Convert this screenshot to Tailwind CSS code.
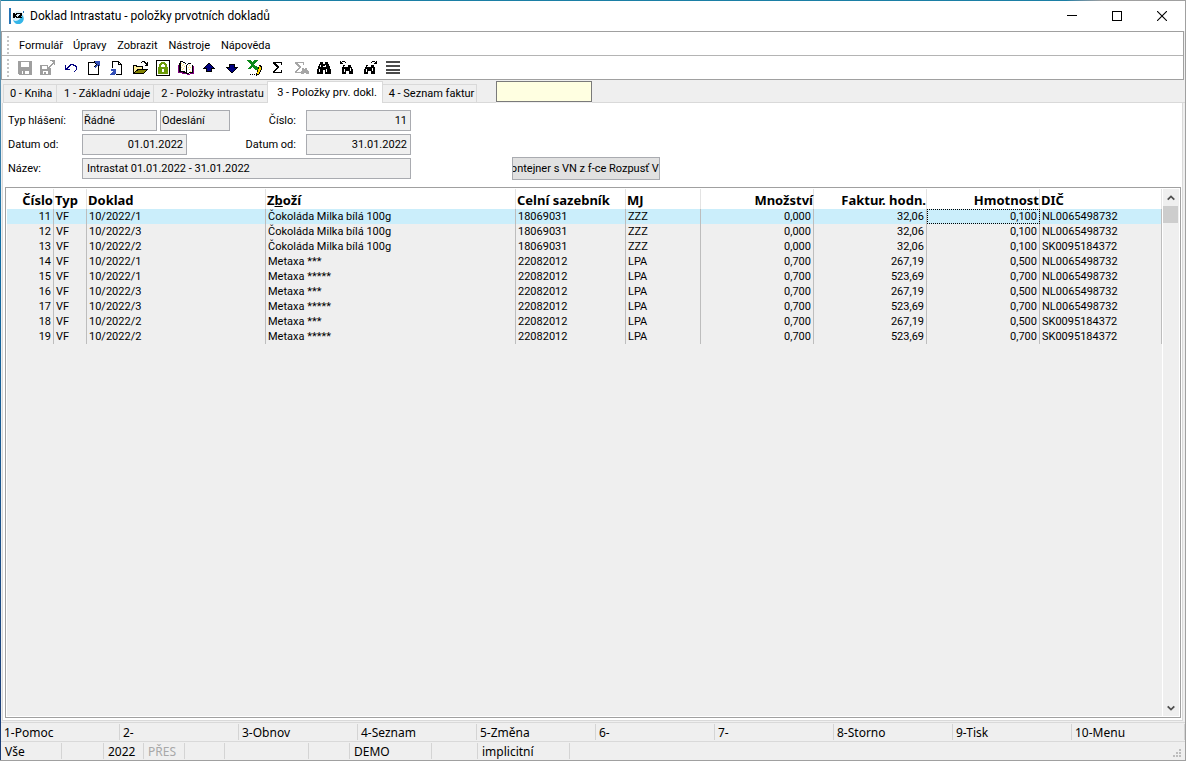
<!DOCTYPE html>
<html lang="cs">
<head>
<meta charset="utf-8">
<title>Doklad Intrastatu - položky prvotních dokladů</title>
<script src="https://cdn.jsdelivr.net/npm/@tailwindcss/browser@4"></script>
</head>
<body class="bg-[#efefef] text-black">
<div class="relative flex h-screen min-h-[480px] flex-col overflow-hidden border-r border-b border-[#a0a0a0] pl-px pt-px font-['Roboto','Noto_Sans',sans-serif] text-[11px] leading-[15px]">
  <div class="absolute inset-x-0 top-0 h-px bg-linear-to-r from-[#1b7fa5] from-90% to-[#a0a0a0] to-93%"></div>
  <div class="absolute inset-y-0 left-0 w-px bg-linear-to-b from-[#7aa3b5] via-[#0f6fa5] via-30% to-[#1c3f78] to-94%"></div>

  <header class="flex h-[30px] shrink-0 items-center bg-white pl-2 text-[12px]">
    <svg class="mr-[5px] size-4" viewBox="0 0 16 16" shape-rendering="crispEdges" aria-hidden="true">
      <circle cx="9" cy="9" r="6" fill="#d9effa" shape-rendering="auto"/>
      <path d="M4 12c3 2 7 1 9-5 3 3 2 7-2 9-3 1-6-1-7-4z" fill="#35b6e8" shape-rendering="auto"/>
      <path d="M0 0h2v16H0z" fill="#2473b5"/>
      <path d="M4 5h2v1h1V5h2v1H8v1H7v1h1v1h1v1H7V9H6v1H4zM9 5h4v3h-1v1h1v1H9V8h1V7h1V6H9z" fill="#000"/>
      <path d="M14 3h1v2h-1z" fill="#2473b5"/>
    </svg>
    <h1 class="flex-1 whitespace-nowrap">Doklad Intrastatu - položky prvotních dokladů</h1>
    <button aria-label="Minimalizovat" class="flex h-full w-[46px] items-center justify-center"><svg class="size-[10px]" viewBox="0 0 10 10" shape-rendering="crispEdges"><path d="M0 4h10v1H0z"/></svg></button>
    <button aria-label="Maximalizovat" class="flex h-full w-[44px] items-center justify-center"><svg class="size-[10px]" viewBox="0 0 10 10" shape-rendering="crispEdges"><path d="M.5 .5h9v9h-9z" fill="none" stroke="#000"/></svg></button>
    <button aria-label="Zavřít" class="flex h-full w-[46px] items-center justify-center"><svg class="size-[10px]" viewBox="0 0 10 10"><path d="M0 0l10 10M10 0L0 10" stroke="#000" stroke-width="1.1"/></svg></button>
  </header>

  <div class="mr-px shrink-0 border border-[#a0a0a0] bg-white">
    <nav class="flex h-[24px] items-center border-b border-[#b4b4b4] pl-[5px] pt-[3px]">
      <span class="mr-[10px] h-[18px] border-l-2 border-dotted border-[#c4c4c4]"></span>
      <button class="mr-[10px]">Formulář</button>
      <button class="mr-[11px]">Úpravy</button>
      <button class="mr-[11px]">Zobrazit</button>
      <button class="mr-[11px]">Nástroje</button>
      <button>Nápověda</button>
    </nav>
    <div class="flex h-[23px] items-center pl-[5px]">
      <span class="mr-[4px] h-[18px] border-l-2 border-dotted border-[#c4c4c4]"></span>
      <button aria-label="Uložit" class="flex w-[23px] justify-center"><svg class="size-4" viewBox="0 0 16 16" shape-rendering="crispEdges"><path d="M1 1h14v14H2v-1H1z" fill="#9f9f9f"/><path d="M4 2h8v5H4zM5 10h7v4H5z" fill="#fff"/><path d="M5 10h7v1H5zM6 11h2v3H6z" fill="#9f9f9f"/></svg></button>
      <button aria-label="Uložit jako" class="flex w-[23px] justify-center"><svg class="size-4" viewBox="0 0 16 16" shape-rendering="crispEdges"><path d="M0 5h8v3h3v7H0z" fill="#9f9f9f"/><path d="M2 6h5v3H2zM3 11h5v3H3z" fill="#fff"/><path d="M4 12h2v2H4zM10 0h5v5h-1V4h-1v1h-1v1h-1v1h-1v1H8V7h1V6h1V5h1V4h1V3h1V2h-1V1h-2z" fill="#9f9f9f"/></svg></button>
      <button aria-label="Zpět" class="flex w-[23px] justify-center"><svg class="size-4" viewBox="0 0 16 16" shape-rendering="crispEdges"><path d="M2 5h1v3h1V7h1V6h1V5h1V4h4v1h2v1h1v4h-1v1h-1v1h-1v-1h1v-1h1V7h-1V6h-2V5H8v1H7v1H6v1H5v1h2v1H2z" fill="#000080"/></svg></button>
      <button aria-label="Otevřít v novém okně" class="flex w-[23px] justify-center"><svg class="size-4" viewBox="0 0 16 16" shape-rendering="crispEdges"><path d="M2 2h11v13H2zM3 3v11h9V3z" fill-rule="evenodd"/><path d="M9 1h5v5h-1v1h-1V6h-1v1h-1v1H9V7H8V6h1V5h1V4H9V3H8V1z" fill="#000"/><path d="M9 1h5v5h-1V5h-1v1h-1v1h-1v1H9V6h1V5h1V4h-1V3H9z" fill="#3450b8"/></svg></button>
      <button aria-label="Převzít" class="flex w-[23px] justify-center"><svg class="size-4" viewBox="0 0 16 16" shape-rendering="crispEdges"><path d="M3 1h7v1h1v1h1v1h1v11H7v-1h5V5H9V2H4v6H3z"/><path d="M10 3h1v1h-1z" fill="#fff"/><path d="M2 9h5v5H6v1H1v-1h1v-1h1v-1h1v-1H2z" fill="#3450b8"/></svg></button>
      <button aria-label="Otevřít" class="flex w-[23px] justify-center"><svg class="size-4" viewBox="0 0 16 16" shape-rendering="crispEdges"><path d="M1 5h4v1h6v3h5v1h-1v1h-1v1h-1v1h-1v1H1z"/><path d="M2 6h2v1h6v2H5v1H4v1H3v1H2z" fill="#ffef9a"/><path d="M6 10h8v1h-1v1h-1v1H3v-1h1v-1h2z" fill="#808000"/><path d="M9 2h1V1h3v1h1v1h1V2h1v4h-3V5h1V4h-1V3h-1V2h-2v1H9z"/></svg></button>
      <button aria-label="Zámek" class="flex w-[23px] justify-center"><svg class="size-4" viewBox="0 0 16 16" shape-rendering="crispEdges"><path d="M1.5 .5h13v15h-13z" fill="#fff" stroke="#000"/><path d="M3 7h1V4h1V3h1V2h4v1h1v1h1v3h1v7H3z" fill="#6a9a08"/><path d="M6 7V5h1V4h2v1h1v2zM7 9h2v3H7z" fill="#fff"/></svg></button>
      <button aria-label="Kniha" class="flex w-[23px] justify-center"><svg class="size-4" viewBox="0 0 16 16" shape-rendering="crispEdges"><path d="M1 3h1V1h3v1h2v1h1v2h1V4h1V3h3v1h1v1h1v8h-4v1H8v-1H5v-1H1z" fill="#000"/><path d="M3 2h2v1h2v1h1v8H7v-1H3zM9 5h1V4h4v8h-3v1H9z" fill="#fff"/><path d="M3 3h1v1H3zM5 4h1v1H5zM4 5h1v1H4zM6 6h1v1H6zM3 7h1v1H3zM5 8h1v1H5zM4 9h1v1H4zM11 5h1v1h-1zM10 7h1v1h-1zM12 7h1v1h-1zM11 9h1v1h-1zM12 11h1v1h-1z" fill="#ffe36a"/><path d="M0 5h1v7h4v1h3v1H4v-1H0zM15 6h1v8h-4v1H9v-1h3v-1h3z" fill="#800080"/></svg></button>
      <button aria-label="Předchozí" class="flex w-[23px] justify-center"><svg class="size-4" viewBox="0 0 16 16" shape-rendering="crispEdges"><path d="M7 3h2v1h1v1h1v1h1v1h1v1h1v1h-3v3H5V9H2V8h1V7h1V6h1V5h1V4h1z" fill="#000"/><path d="M7 4h2v1h1v1h1v1h1v1h-2v3H6V8H4V7h1V6h1V5h1z" fill="#000080"/></svg></button>
      <button aria-label="Další" class="flex w-[23px] justify-center"><svg class="size-4" viewBox="0 0 16 16" shape-rendering="crispEdges"><path d="M5 4h6v3h3v1h-1v1h-1v1h-1v1h-1v1H9v1H7v-1H6v-1H5v-1H4V9H3V8H2V7h3z" fill="#000"/><path d="M6 5h4v3h2v1h-1v1h-1v1H9v1H7v-1H6v-1H5V9H4V8h2z" fill="#000080"/></svg></button>
      <button aria-label="Export do Excelu" class="flex w-[23px] justify-center"><svg class="size-4" viewBox="0 0 16 16" shape-rendering="crispEdges"><path d="M0 0h4v1h1v1h1V1h1V0h4v1h-1v1H9v1H8v1H7v1h1v1h2v1h1v3H8V9H7V8H6V7H5v1H4v1H1V8h1V7h1V6h1V4H3V3H2V2H1V1H0z" fill="#0b8a1a"/><path d="M3 14h1v1H3zM5 14h1v1H5zM7 14h1v1H7zM12 5h2v1h1v4h-1v2h-1v2h-1v1h-2v1H9v-3h1v-3h1V7h1z"/><path d="M12 6h1v1h1v3h-1v2h-1v2h-2v-2h1v-3h1z" fill="#ffd800"/></svg></button>
      <button aria-label="Součet" class="flex w-[23px] justify-center"><svg class="size-4" viewBox="0 0 16 16" shape-rendering="crispEdges"><path d="M3 2h9v3h-1V3H6v1h1v1h1v1h1v2H8v1H7v1H6v1H5v1h6v-2h1v3H3v-2h1v-1h1V9h1V8h1V7H6V6H5V5H4V4H3z"/></svg></button>
      <button aria-label="Součet výběru" class="flex w-[23px] justify-center"><svg class="size-4" viewBox="0 0 16 16" shape-rendering="crispEdges"><path d="M2 2h9v3h-1V3H5v1h1v1h1v1h1v2H7v1H6v1H5v1H4v1h4v1H2v-2h1v-1h1V9h1V8h1V7H5V6H4V5H3V4H2zM9 8h2v1h1V8h2v2h1v1h1v3h-3v-1h-2v1H8v-3h1z" fill="#a6a6a6"/></svg></button>
      <button aria-label="Hledat" class="flex w-[23px] justify-center"><svg class="size-4" viewBox="0 0 16 16" shape-rendering="crispEdges"><path d="M4 2h3v2h2V2h3v2h1v2h1v3h1v5H9v-4H7v4H1V9h1V6h1V4h1z"/><path d="M4 5h1v2H4zM3 9h1v3H3zM9 5h1v2H9zM10 9h1v3h-1zM7 6h2v1H7z" fill="#fff"/></svg></button>
      <button aria-label="Hledat předchozí" class="flex w-[23px] justify-center"><svg class="size-4" viewBox="0 0 16 16" shape-rendering="crispEdges"><path d="M4 5h2v2h3V5h3v2h1v2h1v5h-4v-3H7v3H3V7h1z"/><path d="M5 9h1v3H5zM11 8h1v3h-1zM5 6h1v1H5z" fill="#fff"/><path d="M1 1h1v1h1V1h3v1h1v1H6V2H3v1h1v1H1z"/></svg></button>
      <button aria-label="Hledat další" class="flex w-[23px] justify-center"><svg class="size-4" viewBox="0 0 16 16" shape-rendering="crispEdges"><path d="M4 5h2v2h3V5h3v2h1v7H9v-3H6v3H2V9h1V7h1z"/><path d="M4 9h1v3H4zM10 8h1v3h-1zM5 6h1v1H5z" fill="#fff"/><path d="M15 1h-1v1h-1V1h-3v1H9v1h1V2h3v1h-1v1h3z"/></svg></button>
      <button aria-label="Nabídka" class="flex w-[23px] justify-center"><svg class="size-4" viewBox="0 0 16 16" shape-rendering="crispEdges"><path d="M1 1h14v2H1zM1 5h14v2H1zM1 9h14v2H1zM1 12h14v2H1z" fill="#4a4a4a"/></svg></button>
    </div>
  </div>

  <div role="tablist" class="flex h-[23px] shrink-0 items-end pl-[2px]">
    <button role="tab" class="h-[19px] w-[54px] border border-[#d9d9d9] pt-px pl-[2px] leading-[16px] whitespace-nowrap">0 - Kniha</button>
    <button role="tab" class="h-[19px] w-[97px] border-y border-r border-[#d9d9d9] pt-px pl-1 leading-[16px] whitespace-nowrap">1 - Základní údaje</button>
    <button role="tab" class="h-[19px] w-[113px] border-y border-[#d9d9d9] pt-px pl-1 leading-[16px] whitespace-nowrap">2 - Položky intrastatu</button>
    <button role="tab" aria-selected="true" class="h-[22px] w-[116px] border-x border-t border-[#d9d9d9] bg-white pl-1 whitespace-nowrap">3 - Položky prv. dokl.</button>
    <button role="tab" class="h-[19px] w-[94px] border-y border-r border-[#d9d9d9] pt-px pl-1 leading-[16px] whitespace-nowrap">4 - Seznam faktur</button>
    <div class="h-px w-[19px] bg-[#d9d9d9]"></div>
    <input aria-label="Hledaný text" class="mb-px h-[21px] w-[96px] border border-[#7a7a7a] bg-[#ffffe1] px-1">
    <div class="h-px flex-1 bg-[#d9d9d9]"></div>
  </div>

  <main class="ml-px mr-[2px] flex min-h-0 flex-1 flex-col border-x border-b border-[#d9d9d9] bg-white pl-[2px] pr-px pb-[2px]">
    <form class="flex flex-col gap-[3px] pb-[7px] pl-[3px] pt-[7px]">
      <div class="flex items-center">
        <label for="typ" class="w-[74px]">Typ hlášení:</label>
        <input id="typ" readonly value="Řádné" class="h-[21px] w-[75px] border border-[#a9abb0] bg-[#efefef] px-px">
        <input aria-label="Směr" readonly value="Odeslání" class="ml-[3px] h-[21px] w-[70px] border border-[#a9abb0] bg-[#efefef] px-px">
        <label for="cislo" class="w-[76px] pr-[10px] text-right">Číslo:</label>
        <input id="cislo" readonly value="11" class="h-[21px] w-[105px] border border-[#a9abb0] bg-[#efefef] px-[3px] text-right">
      </div>
      <div class="flex items-center">
        <label for="od" class="w-[74px]">Datum od:</label>
        <input id="od" readonly value="01.01.2022" class="h-[21px] w-[105px] border border-[#a9abb0] bg-[#efefef] px-[3px] text-right">
        <label for="do" class="w-[119px] pr-[10px] text-right">Datum od:</label>
        <input id="do" readonly value="31.01.2022" class="h-[21px] w-[105px] border border-[#a9abb0] bg-[#efefef] px-[3px] text-right">
      </div>
      <div class="flex items-center">
        <label for="nazev" class="w-[74px]">Název:</label>
        <input id="nazev" readonly value="Intrastat 01.01.2022 - 31.01.2022" class="h-[21px] w-[329px] border border-[#a9abb0] bg-[#efefef] px-1">
        <button type="button" class="-my-px ml-[101px] flex h-[23px] w-[148px] items-center justify-center overflow-hidden border border-[#a9abb0] bg-[#e1e1e1] whitespace-nowrap">kontejner s VN z f-ce Rozpusť VN</button>
      </div>
    </form>

    <section class="mt-px flex min-h-0 flex-1 border border-[#a0a0a0] bg-white p-px">
      <div class="min-w-0 flex-1 bg-[#efefef]">
        <table class="w-full table-fixed border-separate border-spacing-0 whitespace-nowrap [&_td]:h-[15px] [&_td]:border-r [&_td]:border-[#bdbdbd] [&_td]:px-[2px] [&_td]:pt-px [&_td]:leading-[14px]">
          <colgroup><col class="w-[47px]"><col class="w-[33px]"><col class="w-[179px]"><col class="w-[250px]"><col class="w-[110px]"><col class="w-[75px]"><col class="w-[113px]"><col class="w-[113px]"><col class="w-[113px]"><col></colgroup>
          <thead>
            <tr class="h-[20px] bg-white text-left font-['Noto_Sans',sans-serif] text-[13px] leading-[18px] [&>th]:border-r [&>th]:border-[#e3e3e3] [&>th]:pt-[2px] [&>th]:pl-px">
              <th class="text-right">Číslo</th><th>Typ</th><th>Doklad</th><th>Z<u>b</u>oží</th><th>Celní sazebník</th><th>MJ</th><th class="text-right">Množství</th><th class="text-right">Faktur. hodn.</th><th class="text-right">Hmotnost</th><th>DIČ</th>
            </tr>
          </thead>
          <tbody>
            <tr class="bg-[#cbeefb]"><td class="text-right">11</td><td>VF</td><td>10/2022/1</td><td>Čokoláda Milka bílá 100g</td><td>18069031</td><td>ZZZ</td><td class="text-right">0,000</td><td class="text-right">32,06</td><td class="text-right outline-1 -outline-offset-1 outline-dotted outline-black">0,100</td><td>NL0065498732</td></tr>
            <tr><td class="text-right">12</td><td>VF</td><td>10/2022/3</td><td>Čokoláda Milka bílá 100g</td><td>18069031</td><td>ZZZ</td><td class="text-right">0,000</td><td class="text-right">32,06</td><td class="text-right">0,100</td><td>NL0065498732</td></tr>
            <tr><td class="text-right">13</td><td>VF</td><td>10/2022/2</td><td>Čokoláda Milka bílá 100g</td><td>18069031</td><td>ZZZ</td><td class="text-right">0,000</td><td class="text-right">32,06</td><td class="text-right">0,100</td><td>SK0095184372</td></tr>
            <tr><td class="text-right">14</td><td>VF</td><td>10/2022/1</td><td>Metaxa ***</td><td>22082012</td><td>LPA</td><td class="text-right">0,700</td><td class="text-right">267,19</td><td class="text-right">0,500</td><td>NL0065498732</td></tr>
            <tr><td class="text-right">15</td><td>VF</td><td>10/2022/1</td><td>Metaxa *****</td><td>22082012</td><td>LPA</td><td class="text-right">0,700</td><td class="text-right">523,69</td><td class="text-right">0,700</td><td>NL0065498732</td></tr>
            <tr><td class="text-right">16</td><td>VF</td><td>10/2022/3</td><td>Metaxa ***</td><td>22082012</td><td>LPA</td><td class="text-right">0,700</td><td class="text-right">267,19</td><td class="text-right">0,500</td><td>NL0065498732</td></tr>
            <tr><td class="text-right">17</td><td>VF</td><td>10/2022/3</td><td>Metaxa *****</td><td>22082012</td><td>LPA</td><td class="text-right">0,700</td><td class="text-right">523,69</td><td class="text-right">0,700</td><td>NL0065498732</td></tr>
            <tr><td class="text-right">18</td><td>VF</td><td>10/2022/2</td><td>Metaxa ***</td><td>22082012</td><td>LPA</td><td class="text-right">0,700</td><td class="text-right">267,19</td><td class="text-right">0,500</td><td>SK0095184372</td></tr>
            <tr><td class="text-right">19</td><td>VF</td><td>10/2022/2</td><td>Metaxa *****</td><td>22082012</td><td>LPA</td><td class="text-right">0,700</td><td class="text-right">523,69</td><td class="text-right">0,700</td><td>SK0095184372</td></tr>
          </tbody>
        </table>
      </div>
      <div class="ml-px flex w-[16px] flex-col bg-[#efefef]">
        <button aria-label="Posunout nahoru" class="flex h-[17px] items-center justify-center"><svg class="h-[6px] w-2" viewBox="0 0 8 6"><path d="M.7 4.7L4 1.4l3.3 3.3" fill="none" stroke="#505050" stroke-width="1.8"/></svg></button>
        <div class="h-[17px] w-[15px] bg-[#cdcdcd]"></div>
        <div class="flex-1"></div>
        <button aria-label="Posunout dolů" class="flex h-[17px] items-center justify-center"><svg class="h-[6px] w-2" viewBox="0 0 8 6"><path d="M.7 1.3L4 4.6l3.3-3.3" fill="none" stroke="#505050" stroke-width="1.8"/></svg></button>
      </div>
    </section>
  </main>

  <footer class="mt-px shrink-0 border-t border-[#d9d9d9] font-['Noto_Sans',sans-serif] text-[12px]">
    <div class="flex h-[19px] border-b border-[#d9d9d9] py-px [&>button]:w-[119px] [&>button]:border-r [&>button]:border-[#d4d4d4] [&>button]:pl-[3px] [&>button]:text-left">
      <button>1-Pomoc</button><button>2-</button><button>3-Obnov</button><button>4-Seznam</button><button>5-Změna</button><button>6-</button><button>7-</button><button>8-Storno</button><button>9-Tisk</button><button class="flex-1">10-Menu</button>
    </div>
    <div class="flex h-[18px] py-px leading-[17px] [&>span]:border-r [&>span]:border-[#d4d4d4] [&>span]:pl-[4px]">
      <span class="w-[61px]">Vše</span><span class="w-[42px]"></span><span class="w-[40px]">2022</span><span class="w-[41px] text-[#a8a8a8]">PŘES</span><span class="w-[40px]"></span><span class="w-[84px]"></span><span class="w-[41px]"></span><span class="w-[82px]">DEMO</span><span class="w-[46px]"></span><span class="w-[92px]">implicitní</span>
      <svg class="ml-auto mr-[2px] size-[10px] self-end" viewBox="0 0 10 10" shape-rendering="crispEdges" aria-hidden="true"><path d="M6 0h2v2H6zM3 3h2v2H3zM6 3h2v2H6zM0 6h2v2H0zM3 6h2v2H3zM6 6h2v2H6z" fill="#bdbdbd"/></svg>
    </div>
  </footer>
</div>
</body>
</html>
